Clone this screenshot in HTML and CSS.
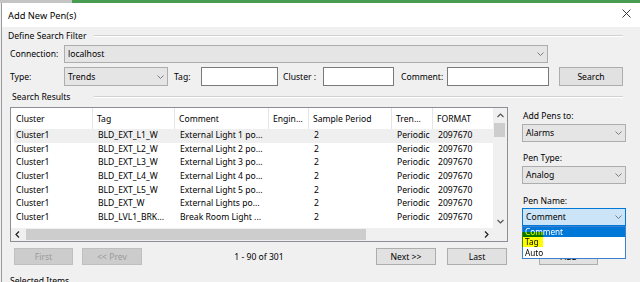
FILE: index.html
```html
<!DOCTYPE html>
<html>
<head>
<meta charset="utf-8">
<link rel="stylesheet" href="styles.css">
</head>
<body>
<div class="strip"><div class="strip-l"></div><div class="strip-r"></div></div>
<div class="dialog">
  <div class="titlebar">
    <span class="title">Add New Pen(s)</span>
    <svg class="close" width="9" height="9" viewBox="0 0 9 9"><path d="M0.5 0.5L8.5 8.5M8.5 0.5L0.5 8.5" stroke="#222" stroke-width="0.9" fill="none"/></svg>
  </div>
  <div class="body">
    <div class="group"><span class="group-t">Define Search Filter</span><span class="rule"></span></div>
    <div class="row conn">
      <span class="lbl lbl-main">Connection:</span>
      <div class="combo combo-conn"><span class="ctext">localhost</span><svg class="chev" width="7" height="4" viewBox="0 0 7 4"><polyline points="0.5,0.5 3.5,3.5 6.5,0.5" fill="none" stroke="#707070" stroke-width="0.9"/></svg></div>
    </div>
    <div class="row type">
      <span class="lbl lbl-main">Type:</span>
      <div class="combo combo-type"><span class="ctext">Trends</span><svg class="chev" width="7" height="4" viewBox="0 0 7 4"><polyline points="0.5,0.5 3.5,3.5 6.5,0.5" fill="none" stroke="#707070" stroke-width="0.9"/></svg></div>
      <span class="lbl lbl-tag">Tag:</span>
      <div class="input in-tag"></div>
      <span class="lbl lbl-cluster">Cluster :</span>
      <div class="input in-cluster"></div>
      <span class="lbl lbl-comment">Comment:</span>
      <div class="input in-comment"></div>
      <div class="btn btn-search">Search</div>
    </div>
    <div class="group group-results"><span class="group-t">Search Results</span><span class="rule"></span></div>
    <div class="main">
      <div class="left">
        <div class="list">
          <div class="cols">
            <div class="hdr"><span>Cluster</span><span>Tag</span><span>Comment</span><span>Engin...</span><span>Sample Period</span><span>Tren...</span><span>FORMAT</span></div>
            <div class="r sel"><span>Cluster1</span><span>BLD_EXT_L1_W</span><span>External Light 1 po...</span><span></span><span>2</span><span>Periodic</span><span>2097670</span></div>
            <div class="r"><span>Cluster1</span><span>BLD_EXT_L2_W</span><span>External Light 2 po...</span><span></span><span>2</span><span>Periodic</span><span>2097670</span></div>
            <div class="r"><span>Cluster1</span><span>BLD_EXT_L3_W</span><span>External Light 3 po...</span><span></span><span>2</span><span>Periodic</span><span>2097670</span></div>
            <div class="r"><span>Cluster1</span><span>BLD_EXT_L4_W</span><span>External Light 4 po...</span><span></span><span>2</span><span>Periodic</span><span>2097670</span></div>
            <div class="r"><span>Cluster1</span><span>BLD_EXT_L5_W</span><span>External Light 5 po...</span><span></span><span>2</span><span>Periodic</span><span>2097670</span></div>
            <div class="r"><span>Cluster1</span><span>BLD_EXT_W</span><span>External Lights po...</span><span></span><span>2</span><span>Periodic</span><span>2097670</span></div>
            <div class="r"><span>Cluster1</span><span>BLD_LVL1_BRK...</span><span>Break Room Light ...</span><span></span><span>2</span><span>Periodic</span><span>2097670</span></div>
          </div>
          <div class="vscroll">
            <div class="arrow"><svg width="7" height="5" viewBox="0 0 7 5"><polyline points="0.5,4 3.5,1 6.5,4" fill="none" stroke="#505050" stroke-width="1.1"/></svg></div>
            <div class="vthumb"></div>
            <div class="spacer"></div>
            <div class="arrow"><svg width="7" height="5" viewBox="0 0 7 5"><polyline points="0.5,1 3.5,4 6.5,1" fill="none" stroke="#505050" stroke-width="1.1"/></svg></div>
          </div>
          <div class="hscroll">
            <div class="harrow"><svg width="5" height="7" viewBox="0 0 5 7"><polyline points="4,0.5 1,3.5 4,6.5" fill="none" stroke="#202020" stroke-width="1.2"/></svg></div>
            <div class="hthumb"></div>
            <div class="spacer"></div>
            <div class="harrow harrow-r"><svg width="5" height="7" viewBox="0 0 5 7"><polyline points="1,0.5 4,3.5 1,6.5" fill="none" stroke="#202020" stroke-width="1.2"/></svg></div>
          </div>
          <div class="corner"></div>
        </div>
        <div class="pager">
          <div class="btn btn-dis btn-first">First</div>
          <div class="btn btn-dis btn-prev">&lt;&lt; Prev</div>
          <span class="count">1 - 90 of 301</span>
          <div class="btn btn-next">Next &gt;&gt;</div>
          <div class="btn btn-last">Last</div>
        </div>
      </div>
      <div class="side">
        <span class="slbl slbl-1">Add Pens to:</span>
        <div class="combo scombo scombo-1"><span class="ctext">Alarms</span><svg class="chev" width="7" height="4" viewBox="0 0 7 4"><polyline points="0.5,0.5 3.5,3.5 6.5,0.5" fill="none" stroke="#707070" stroke-width="0.9"/></svg></div>
        <span class="slbl slbl-2">Pen Type:</span>
        <div class="combo scombo scombo-2"><span class="ctext">Analog</span><svg class="chev" width="7" height="4" viewBox="0 0 7 4"><polyline points="0.5,0.5 3.5,3.5 6.5,0.5" fill="none" stroke="#707070" stroke-width="0.9"/></svg></div>
        <span class="slbl slbl-3">Pen Name:</span>
        <div class="pn-wrap">
          <div class="combo scombo combo-focus"><span class="ctext">Comment</span><svg class="chev" width="7" height="4" viewBox="0 0 7 4"><polyline points="0.5,0.5 3.5,3.5 6.5,0.5" fill="none" stroke="#707070" stroke-width="0.9"/></svg></div>
          <div class="dropdown">
            <div class="opt opt-sel">Comment</div>
            <div class="opt">Tag</div>
            <div class="opt">Auto</div>
            <div class="marker"></div>
          </div>
        </div>
        <div class="btn btn-add">Add</div>
      </div>
    </div>
    <div class="group group-sel"><span class="group-t">Selected Items</span></div>
  </div>
</div>
</body>
</html>
```

FILE: styles.css
```css
* { box-sizing: border-box; margin: 0; padding: 0; }
html, body { width: 640px; height: 282px; overflow: hidden; }
body {
  background: #f0f0f0;
  font-family: "Noto Sans", "Open Sans", "Liberation Sans", sans-serif;
  font-size: 8.6px;
  color: #000;
}
.strip { display: flex; height: 3px; }
.strip-l { width: 72px; background: #c4c4c4; }
.strip-r { flex: 1; background: #4a9d50; }

.dialog {
  margin-left: 1px;
  border-left: 1px solid #9a9a9a;
  height: 279px;
  background: #f0f0f0;
}
.titlebar {
  height: 24px;
  background: #fff;
  display: flex;
  align-items: center;
  justify-content: space-between;
  padding: 0 9px 0 6px;
}
.title { font-size: 9.3px; }
.close { align-self: flex-start; margin-top: 6px; }

.body { padding: 2px 17px 0 6px; }

.group { display: flex; align-items: center; height: 14px; }
.rule {
  margin-left: auto;
  width: 529px;
  height: 2px;
  border-top: 1px solid #d2d2d2;
  border-bottom: 1px solid #fff;
}
.group-results { margin-top: 4px; height: 13px; padding-left: 4px; }
.group-sel { margin-top: 9px; padding-left: 2px; }

.row { display: flex; align-items: center; }
.conn { margin-top: 2px; height: 18px; padding-left: 2px; }
.type { margin-top: 4px; height: 19px; padding-left: 2px; }
.lbl { white-space: nowrap; }
.lbl-main { width: 54px; }
.lbl-tag { margin-left: 6px; width: 27px; }
.lbl-cluster { margin-left: 5px; width: 40px; }
.lbl-comment { margin-left: 7px; width: 46px; }

.combo {
  display: flex;
  align-items: center;
  height: 18px;
  background: #e5e5e5;
  border: 1px solid #adadad;
  padding-left: 3px;
}
.ctext { flex: 1; white-space: nowrap; }
.chev { margin-right: 3px; }
.combo-conn { width: 484px; }
.combo-type { width: 104px; height: 19px; }

.input { height: 19px; background: #fff; border: 1px solid #7a7a7a; }
.in-tag { width: 77px; }
.in-cluster { width: 71px; }
.in-comment { width: 102px; }

.btn {
  display: flex;
  align-items: center;
  justify-content: center;
  background: #e1e1e1;
  border: 1px solid #adadad;
  height: 17px;
  white-space: nowrap;
}
.btn-search { margin-left: 10px; width: 64px; height: 19px; }
.btn-dis { background: #cccccc; border-color: #bfbfbf; color: #9a9a9a; }

.main { display: flex; margin-top: 4px; padding-left: 2px; }
.left { width: 498px; }

.list {
  border: 1px solid #8c8f96;
  background: #fff;
  display: grid;
  grid-template-columns: 482px 14px;
  grid-template-rows: 120px 13px;
  height: 135px;
}
.cols { overflow: hidden; padding-left: 3px; }
.hdr, .r {
  display: grid;
  grid-template-columns: 79px 82px 94px 40px 83px 41px 60px;
}
.hdr { height: 21px; }
.hdr span {
  display: flex;
  align-items: center;
  padding-left: 4px;
  border-right: 1px solid #e5e5e5;
  white-space: nowrap;
  overflow: hidden;
}
.hdr span:first-child { padding-left: 2px; }
.hdr span:last-child { border-right: none; }
.r { height: 13.65px; }
.r span {
  padding-left: 5px;
  line-height: 13.65px;
  white-space: nowrap;
  overflow: hidden;
}
.r span:first-child { padding-left: 2px; }
.r.sel { background: #efefef; }

.vscroll { background: #f0f0f0; display: flex; flex-direction: column; }
.arrow { height: 14px; display: flex; align-items: center; justify-content: center; }
.vthumb { margin: 1px 2px 0 1px; height: 14px; background: #cdcdcd; }
.spacer { flex: 1; }
.hscroll { background: #f0f0f0; display: flex; }
.harrow { width: 13px; display: flex; align-items: center; justify-content: center; }
.harrow-r { width: 14px; }
.hthumb { margin: 1px 0 1px 2px; width: 340px; background: #cdcdcd; }
.corner { background: #f0f0f0; }

.pager { display: flex; align-items: center; margin-top: 6px; height: 17px; padding: 0 1px 0 4px; }
.btn-first { width: 59px; }
.btn-prev { width: 60px; margin-left: 9px; }
.count { flex: 1; text-align: center; }
.btn-next { width: 60px; }
.btn-last { width: 60px; margin-left: 11px; }

.side { margin-left: 14px; width: 104px; display: flex; flex-direction: column; }
.slbl { display: block; height: 14px; line-height: 14px; padding-left: 1px; }
.slbl-1 { margin-top: 2px; }
.slbl-2 { margin-top: 9px; }
.slbl-3 { margin-top: 10px; }
.scombo { width: 104px; }
.scombo-1, .scombo-2 { margin-top: 1px; }
.pn-wrap { position: relative; }
.combo-focus { background: #cce4f7; border-color: #0078d7; }
.dropdown {
  position: absolute;
  top: 18px;
  left: 0;
  width: 104px;
  height: 33px;
  background: #fff;
  border: 1px solid #3c7fd0;
  z-index: 2;
}
.opt { height: 10.4px; line-height: 10.4px; padding-left: 2px; font-size: 8.2px; overflow: hidden; }
.opt-sel { background: #0078d7; color: #fff; }
.marker {
  position: absolute;
  left: -1px;
  top: 5px;
  width: 21px;
  height: 15px;
  background: #ffff00;
  mix-blend-mode: multiply;
}
.btn-add { margin-top: 22px; margin-left: 17px; width: 59px; }
```
